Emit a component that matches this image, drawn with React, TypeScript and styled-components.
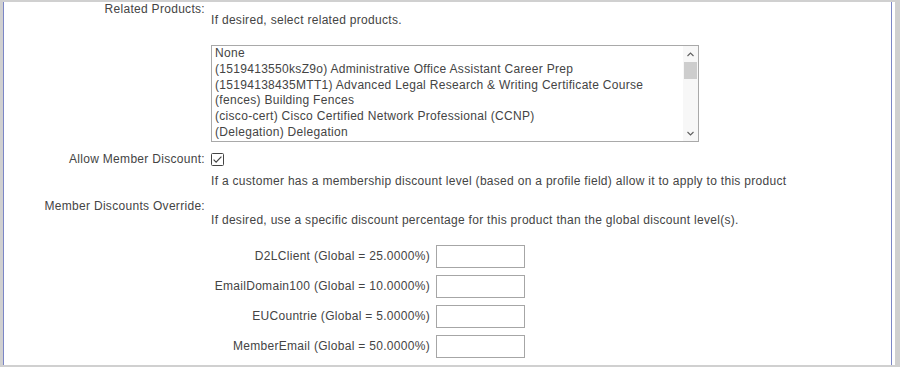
import React from "react";
import styled, { createGlobalStyle } from "styled-components";

const Global = createGlobalStyle`
  html, body { margin: 0; padding: 0; background: #fff; }
  body {
    font-family: "Liberation Sans", Arial, sans-serif;
    font-size: 12px;
    letter-spacing: 0.3px;
    color: #444;
  }
`;

const Page = styled.div`
  width: 900px;
  height: 369px;
  overflow: hidden;
  background: #fff;
`;

const Frame = styled.div`
  box-sizing: border-box;
  width: 900px;
  height: 367px;
  border-style: solid;
  border-color: #d0d0d0;
  border-width: 2px 5px 2px 3px;
  padding-right: 3px;
  display: flex;
`;

const Panel = styled.div`
  flex: 1;
  border-left: 1px solid #7b86c6;
  border-right: 1px solid #7b86c6;
  display: flex;
  flex-direction: column;
  gap: 10px;
`;

const Row = styled.div`
  display: grid;
  grid-template-columns: 201px 1fr;
  column-gap: 6px;
  align-items: start;
`;

const Label = styled.div`
  text-align: right;
  line-height: 15px;
  white-space: nowrap;
`;

const Value = styled.div<{ $top?: number }>`
  padding-top: ${(p) => p.$top ?? 0}px;
  display: flex;
  flex-direction: column;
  align-items: flex-start;
`;

const Hint = styled.div<{ $mt?: number }>`
  line-height: 15px;
  margin-top: ${(p) => p.$mt ?? 0}px;
  white-space: nowrap;
`;

const ListBox = styled.div`
  box-sizing: border-box;
  margin-top: 17px;
  width: 488px;
  height: 97px;
  border: 1px solid #a9a9a9;
  display: flex;
  background: #fff;
`;

const Items = styled.div`
  flex: 1;
  padding: 0 3px;
  overflow: hidden;
`;

const Item = styled.div`
  line-height: 15.8px;
  white-space: nowrap;
`;

const ScrollBar = styled.div`
  width: 15px;
  display: flex;
  flex-direction: column;
  background: #f7f7f7;
`;

const ArrowBtn = styled.div`
  height: 16px;
  display: flex;
  align-items: center;
  justify-content: center;
`;

const Thumb = styled.div`
  height: 17px;
  margin: 0 1px;
  background: #cdcdcd;
`;

const Spacer = styled.div`
  flex: 1;
`;

const CheckLine = styled.div`
  height: 15px;
  display: flex;
  align-items: center;
`;

const DiscountGrid = styled.div`
  margin-top: 17px;
  display: grid;
  grid-template-columns: 219px 89px;
  column-gap: 6px;
  row-gap: 7px;
  align-items: center;
`;

const DiscountLabel = styled.div`
  text-align: right;
  white-space: nowrap;
  line-height: 15px;
`;

const TextBox = styled.input`
  box-sizing: border-box;
  width: 89px;
  height: 23px;
  border: 1px solid #a6a6a6;
  margin: 0;
  padding: 2px 4px;
  font: inherit;
  background: #fff;
`;

const Chevron = ({ up }: { up?: boolean }) => (
  <svg width="7" height="5" viewBox="0 0 7 5">
    <path
      d={up ? "M0.5 4 L3.5 1 L6.5 4" : "M0.5 1 L3.5 4 L6.5 1"}
      fill="none"
      stroke="#606060"
      strokeWidth="1.1"
    />
  </svg>
);

const Checkbox = () => (
  <svg width="13" height="13" viewBox="0 0 13 13">
    <rect x="0.5" y="0.5" width="12" height="12" rx="1" fill="#fff" stroke="#444" />
    <path d="M2.6 6.6 L5.1 9.1 L10.4 3.6" fill="none" stroke="#444" strokeWidth="1.2" />
  </svg>
);

const products = [
  "None",
  "(1519413550ksZ9o) Administrative Office Assistant Career Prep",
  "(15194138435MTT1) Advanced Legal Research & Writing Certificate Course",
  "(fences) Building Fences",
  "(cisco-cert) Cisco Certified Network Professional (CCNP)",
  "(Delegation) Delegation",
];

const discounts = [
  "D2LClient (Global = 25.0000%)",
  "EmailDomain100 (Global = 10.0000%)",
  "EUCountrie (Global = 5.0000%)",
  "MemberEmail (Global = 50.0000%)",
];

export default function App() {
  return (
    <Page>
      <Global />
      <Frame>
        <Panel>
          <Row>
            <Label>Related Products:</Label>
            <Value $top={11}>
              <Hint>If desired, select related products.</Hint>
              <ListBox>
                <Items>
                  {products.map((p) => (
                    <Item key={p}>{p}</Item>
                  ))}
                </Items>
                <ScrollBar>
                  <ArrowBtn>
                    <Chevron up />
                  </ArrowBtn>
                  <Thumb />
                  <Spacer />
                  <ArrowBtn>
                    <Chevron />
                  </ArrowBtn>
                </ScrollBar>
              </ListBox>
            </Value>
          </Row>
          <Row>
            <Label>Allow Member Discount:</Label>
            <Value>
              <CheckLine>
                <Checkbox />
              </CheckLine>
              <Hint $mt={7}>
                If a customer has a membership discount level (based on a profile field) allow it to apply to this product
              </Hint>
            </Value>
          </Row>
          <Row>
            <Label>Member Discounts Override:</Label>
            <Value $top={14}>
              <Hint>
                If desired, use a specific discount percentage for this product than the global discount level(s).
              </Hint>
              <DiscountGrid>
                {discounts.map((d) => (
                  <React.Fragment key={d}>
                    <DiscountLabel>{d}</DiscountLabel>
                    <TextBox type="text" />
                  </React.Fragment>
                ))}
              </DiscountGrid>
            </Value>
          </Row>
        </Panel>
      </Frame>
    </Page>
  );
}
